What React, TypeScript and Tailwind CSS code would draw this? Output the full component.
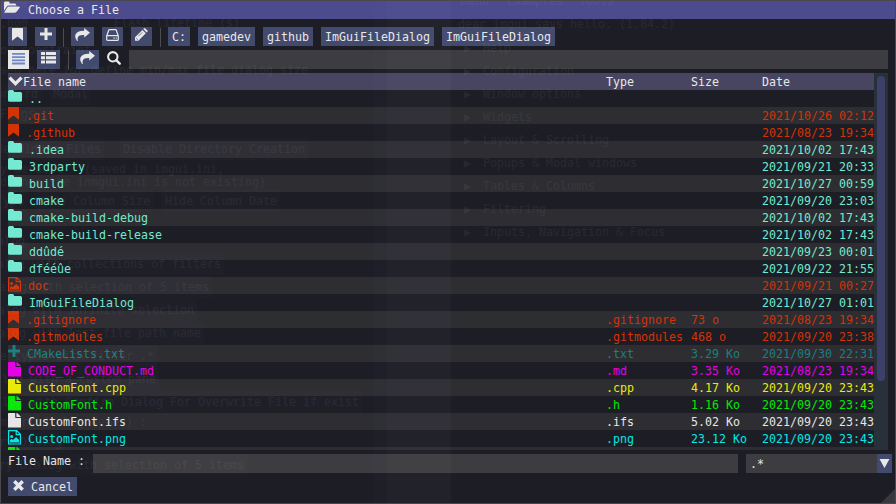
import type { ReactNode } from 'react';

type IconProps = { className?: string };

const FolderIcon = () => (
  <svg className="block h-3 w-3.5 shrink-0" viewBox="0 0 14 12" fill="currentColor">
    <path d="M0 1.6Q0 .1 1.5.1H4.6Q6 .1 6 1.6V2H12.4Q14 2 14 3.5V10.2Q14 11.8 12.4 11.8H1.6Q0 11.8 0 10.2Z" />
  </svg>
);
const BookmarkIcon = ({ className = '' }: IconProps) => (
  <svg className={`block h-[13px] w-[11px] shrink-0 ${className}`} viewBox="0 0 11 13" fill="currentColor">
    <path d="M.8 0H10.2Q11 0 11 .8V12.8L5.5 8.6 0 12.8V.8Q0 0 .8 0Z" />
  </svg>
);
const PlusIcon = ({ className = '' }: IconProps) => (
  <svg className={`block h-[13px] w-3 shrink-0 ${className}`} viewBox="0 0 12 13" fill="none" stroke="currentColor" strokeWidth="3">
    <path d="M0 6H12M6 0V12" />
  </svg>
);
const FileIcon = () => (
  <svg className="block h-[15px] w-[13px] shrink-0" viewBox="0 0 13 15" fill="currentColor">
    <path d="M0 .7Q0 0 .7 0H7.2V4.2Q7.2 5 8 5H13V14Q13 14.6 12.3 14.6H.7Q0 14.6 0 14Z" />
    <path d="M8.4 0Q9.4.1 10 .8L12.2 3Q12.8 3.6 12.8 4H8.4Z" />
  </svg>
);
const ImageFileIcon = () => (
  <svg className="block h-[15px] w-[13px] shrink-0" viewBox="0 0 13 15" fill="none" stroke="currentColor" strokeWidth="1.2">
    <path d="M.6.6H8.7L12.4 4.3V14H.6ZM8.2.6V4.7H12.4" />
    <path d="M2 12.4V10.3L3.6 8.8 4.9 10 8.1 6.9 11 9.8V12.4Z" fill="currentColor" stroke="none" />
    <circle cx="3.7" cy="6.6" r="1.5" fill="currentColor" stroke="none" />
  </svg>
);
const FolderOpenIcon = () => (
  <svg className="block h-[13px] w-4 shrink-0" viewBox="0 0 16 13" fill="currentColor">
    <path d="M0 9.8V2Q0 .6 1.4.6H4.2Q5.6.6 5.6 2V2.5H10.6Q12.3 2.5 12.3 4.5H5Q3.5 4.5 2.5 5.9Z" />
    <path d="M4.8 5.6H15.2Q16.4 5.6 15.6 6.8L12.8 10.4Q11.7 11.8 10.2 11.8H1Q0 11.8.6 10.8L3.2 6.6Q3.8 5.6 4.8 5.6Z" />
  </svg>
);
const ShareIcon = () => (
  <svg className="mt-px block h-3.5 w-[15px] shrink-0" viewBox="0 0 15 14" fill="currentColor">
    <path d="M9.2 0 15 4.8 9.2 9.6V7Q4.1 6.6 2.9 9.2 2.2 10.6 2.8 13H2Q0 10.4.1 7.8.8 2.8 9.2 2.7Z" />
  </svg>
);
const DriveIcon = () => (
  <svg className="block h-3 w-[13px] shrink-0" viewBox="0 0 13 12" fill="none" stroke="currentColor" strokeWidth="1.2" strokeLinejoin="round">
    <path d="M.7 7 2.7 1.2Q2.9.6 3.5.6H9.5Q10.1.6 10.3 1.2L12.3 7V10.4Q12.3 11.4 11.3 11.4H1.7Q.7 11.4.7 10.4ZM.7 6.7H12.3M7.4 9.1H8.6M9.7 9.1H10.8" />
  </svg>
);
const PencilIcon = () => (
  <svg className="block h-[13px] w-[13px] shrink-0" viewBox="0 0 13 13" fill="currentColor">
    <path d="M0 12.8V9.3L7.4 1.9 10.8 5.3 3.4 12.7ZM8.2 1.1 9.1.3Q9.7-.2 10.3.4L12.4 2.5Q13 3.1 12.4 3.7L11.6 4.5Z" />
    <path d="M1.2 10.1 2.8 11.7M3.4 8.2 7.2 4.4" stroke="#424a6d" strokeWidth=".7" />
  </svg>
);
const LinesIcon = () => (
  <svg className="block h-3 w-[13px] shrink-0" viewBox="0 0 13 12" fill="#6e86ce">
    <path d="M0 0H13V1.8H0ZM0 3.3H13V5H0ZM0 6.4H13V8.2H0ZM0 9.6H13V11.4H0Z" />
  </svg>
);
const ListIcon = () => (
  <svg className="block h-3 w-[15px] shrink-0" viewBox="0 0 15 12" fill="currentColor">
    <path d="M.5 0H4V3H.5Q0 3 0 2.5V.5Q0 0 .5 0ZM5 0H14.5Q15 0 15 .5V2.5Q15 3 14.5 3H5ZM0 4.3H4V7.3H0ZM5 4.3H15V7.3H5ZM0 8.6H4V11.6H.5Q0 11.6 0 11ZM5 8.6H15V11Q15 11.6 14.5 11.6H5Z" />
  </svg>
);
const SearchIcon = () => (
  <svg className="block h-3.5 w-3.5 shrink-0" viewBox="0 0 14 14" fill="none" stroke="currentColor">
    <circle cx="5.8" cy="5.8" r="4.7" strokeWidth="2.1" />
    <path d="M9.2 9.2 12.7 12.7" strokeWidth="2.4" strokeLinecap="round" />
  </svg>
);
const ChevronIcon = () => (
  <svg className="block h-3 w-[15px] shrink-0" viewBox="0 0 15 12" fill="none" stroke="currentColor" strokeWidth="3.3">
    <path d="M1.5 2.6 7.5 8.6 13.5 2.6" />
  </svg>
);
const CrossIcon = () => (
  <svg className="block h-3 w-[11px] shrink-0" viewBox="0 0 11 12" fill="none" stroke="currentColor" strokeWidth="3.5">
    <path d="M1.3 1.3 9.7 9.7M9.7 1.3 1.3 9.7" />
  </svg>
);

const RED = 'text-[#d43306]';
const MINT = 'text-[#73ead1]';
const icons = {
  folder: <FolderIcon />,
  mark: <BookmarkIcon />,
  image: <ImageFileIcon />,
  plus: <PlusIcon />,
  file: <FileIcon />,
};
type Row = [keyof typeof icons, string, string, string, string, string];
const rows: Row[] = [
  ['folder', '..', '', '', '', MINT],
  ['mark', '.git', '', '', '2021/10/26 02:12', RED],
  ['mark', '.github', '', '', '2021/08/23 19:34', RED],
  ['folder', '.idea', '', '', '2021/10/02 17:43', MINT],
  ['folder', '3rdparty', '', '', '2021/09/21 20:33', MINT],
  ['folder', 'build', '', '', '2021/10/27 00:59', MINT],
  ['folder', 'cmake', '', '', '2021/09/20 23:03', MINT],
  ['folder', 'cmake-build-debug', '', '', '2021/10/02 17:43', MINT],
  ['folder', 'cmake-build-release', '', '', '2021/10/02 17:43', MINT],
  ['folder', 'ddûdé', '', '', '2021/09/23 00:01', MINT],
  ['folder', 'dfééûe', '', '', '2021/09/22 21:55', MINT],
  ['image', 'doc', '', '', '2021/09/21 00:27', RED],
  ['folder', 'ImGuiFileDialog', '', '', '2021/10/27 01:01', MINT],
  ['mark', '.gitignore', '.gitignore', '73 o', '2021/08/23 19:34', RED],
  ['mark', '.gitmodules', '.gitmodules', '468 o', '2021/09/20 23:38', RED],
  ['plus', 'CMakeLists.txt', '.txt', '3.29 Ko', '2021/09/30 22:31', 'text-[#1f7f7c]'],
  ['file', 'CODE_OF_CONDUCT.md', '.md', '3.35 Ko', '2021/08/23 19:34', 'text-[#e600e6]'],
  ['file', 'CustomFont.cpp', '.cpp', '4.17 Ko', '2021/09/20 23:43', 'text-[#eaea08]'],
  ['file', 'CustomFont.h', '.h', '1.16 Ko', '2021/09/20 23:43', 'text-[#06e806]'],
  ['file', 'CustomFont.ifs', '.ifs', '5.02 Ko', '2021/09/20 23:43', 'text-[#e6e6e6]'],
  ['image', 'CustomFont.png', '.png', '23.12 Ko', '2021/09/20 23:43', 'text-[#06e6e6]'],
  ['file', '', '', '', '', 'text-[#06e806]'],
];

// Text of the windows behind the dialog: x, y, text, whether it sits on a button.
const behind: [number, number, string, boolean?][] = [
  [13, -4, '20 6.3 :'], [0, 15, ',000'], [114, 15, 'Flash lifetime (s)'],
  [0, 42, 'og constraint'], [0, 62, 'sen here for define min/max file dialog size'],
  [-4, 86, 'andard', true], [53, 86, 'Modal', true], [0, 106, 'F  gs :'],
  [-4, 141, 'de Hidden Files', true], [123, 141, 'Disable Directory Creation', true],
  [0, 161, 'y default   (saved in imgui.ini,'], [0, 174, 'd when the inmgui.ini is not existing)'],
  [-4, 193, 'Type', true], [38, 193, 'Hide Column Size', true], [165, 193, 'Hide Column Date', true],
  [-3, 233, 'alog', true], [-3, 256, 'alog with collections of filters', true],
  [-1, 279, 'alog with selection of 5 items', true], [-2, 302, 'alog with infinite selection', true],
  [-2, 325, 'alog with last file path name', true], [0, 348, 'e types with filter .*', true],
  [2, 371, 'log with a custom pane', true],
  [2, 394, 'log with Confirm Dialog For Overwrite File if exist', true],
  [0, 414, 'mport dialog demo() :'], [-1, 434, 'ry Dialog', true],
  [-1, 457, 'ry Dialog with selection of 5 items', true], [-4, 480, 't :'],
  [461, -7, 'Menu'], [507, -7, 'Examples'], [579, -7, 'Tools'],
  [458, 16, 'dear imgui says hello. (1.84.2)'],
  [464, 40, '▶'], [483, 40, 'Help'], [464, 63, '▶'], [483, 63, 'Configuration'],
  [464, 86, '▶'], [483, 86, 'Window options'], [464, 109, '▶'], [483, 109, 'Widgets'],
  [464, 132, '▶'], [483, 132, 'Layout & Scrolling'], [464, 155, '▶'], [483, 155, 'Popups & Modal windows'],
  [464, 178, '▶'], [483, 178, 'Tables & Columns'], [464, 201, '▶'], [483, 201, 'Filtering'],
  [464, 224, '▶'], [483, 224, 'Inputs, Navigation & Focus'],
];

const Behind = () => (
  <div className="pointer-events-none absolute -inset-px overflow-hidden">
    <div className="absolute inset-y-0 left-[374px] w-[13px] bg-[#8080ff]/[0.02]" />
    <div className="absolute inset-y-0 left-[387px] w-16 bg-[#d8d8ff]/[0.027]" />
    {behind.map(([x, y, text, button]) => (
      <span
        key={`${x}-${y}`}
        className={`absolute whitespace-pre leading-4 text-white/[0.05] ${button ? 'bg-[#a0a0ff]/[0.015] shadow-[0_0_0_3px_rgba(160,160,255,0.015)]' : ''}`}
        style={{ left: x, top: y }}
      >
        {text}
      </span>
    ))}
  </div>
);

const Tool = ({ w, children }: { w: string; children: ReactNode }) => (
  <div className={`flex h-[19px] shrink-0 justify-center bg-[#424a6d] ${w}`}>{children}</div>
);
const Rule = () => <div className="mt-px h-[19px] w-px shrink-0 bg-[#4b4b50]" />;

export default function App() {
  return (
    <div className="relative flex h-[504px] w-[896px] flex-col overflow-hidden border border-[#48484e] bg-[#1d1d25] font-['DejaVu_Sans_Mono','Liberation_Mono',monospace] text-[11.63px] leading-[19px] text-[#e8e8e8]">
      <header className="flex h-[18px] shrink-0 bg-[#4b4b8d] pl-[3px]">
        <FolderOpenIcon />
        <span className="pl-2">Choose a File</span>
      </header>

      <div className="mt-2 flex h-[19px] shrink-0 gap-[7px] pl-[7px] leading-[21px]">
        <div className="flex gap-2">
          <Tool w="w-[19px]"><BookmarkIcon className="mt-px" /></Tool>
          <Tool w="w-[21px]"><PlusIcon className="mt-px" /></Tool>
        </div>
        <Rule />
        <div className="mr-px flex gap-2">
          <Tool w="w-[23px]"><ShareIcon /></Tool>
          <Tool w="w-[21px]"><div className="mt-0.5"><DriveIcon /></div></Tool>
          <Tool w="w-[21px]"><div className="mt-px"><PencilIcon /></div></Tool>
        </div>
        <Rule />
        <div className="flex gap-2">
          <Tool w="w-[22px]">C:</Tool>
          <Tool w="w-[57px]">gamedev</Tool>
          <Tool w="w-[50px]">github</Tool>
          <Tool w="w-[113px]">ImGuiFileDialog</Tool>
          <Tool w="w-[113px]">ImGuiFileDialog</Tool>
        </div>
      </div>

      <div className="mt-1 flex h-[19px] shrink-0 px-[7px]">
        <div className="mr-2 flex w-[21px] justify-center bg-[#e8e8e4] pt-[3px]"><LinesIcon /></div>
        <Tool w="w-[23px]"><div className="mt-0.5"><ListIcon /></div></Tool>
        <div className="ml-2 mr-[7px]"><Rule /></div>
        <Tool w="w-[23px]"><ShareIcon /></Tool>
        <div className="mx-2 mt-px"><SearchIcon /></div>
        <div className="flex-1 bg-[#3d3c40]" />
      </div>

      <div className="ml-[7px] mt-1 flex h-[377px] w-[880px] shrink-0 overflow-hidden">
        <div className="w-[866px]">
          <div className="grid h-[17px] grid-cols-[598px_85px_71px_112px] bg-[#474560]">
            <div className="flex"><div className="mt-0.5"><ChevronIcon /></div>File name</div>
            <span>Type</span>
            <span>Size</span>
            <span>Date</span>
          </div>
          {rows.map(([kind, name, type, size, date, color], i) => (
            <div
              key={i}
              className={`grid h-[17px] grid-cols-[598px_85px_71px_112px] whitespace-pre ${color} ${i % 2 ? 'bg-[#2d2d32]' : ''}`}
            >
              <div className="flex gap-[7px]">{icons[kind]}<span>{name}</span></div>
              <span>{type}</span>
              <span>{size}</span>
              <span>{date}</span>
            </div>
          ))}
        </div>
        <div className="flex w-3.5 justify-center bg-[#28303a] pt-[3px]">
          <div className="h-[305px] w-2 rounded-full bg-[#3d4069]" />
        </div>
      </div>

      <div className="mt-1 flex h-[19px] shrink-0 pl-[7px]">
        <span className="w-[85px] leading-[15px]">File Name :</span>
        <div className="mr-2 w-[645px] bg-[#3d3c40]" />
        <div className="w-[131px] bg-[#3d3c40] pl-1 leading-[21px]">.*</div>
        <div className="flex w-[15px] justify-center bg-[#424a6d] pt-[5px]">
          <svg className="h-[9px] w-[11px]" viewBox="0 0 11 9" fill="currentColor"><path d="M.5 0H10.5L5.5 9Z" /></svg>
        </div>
      </div>

      <div className="ml-[7px] mt-1 flex h-[19px] w-[69px] shrink-0 bg-[#424a6d] pl-[5px] leading-[21px]">
        <div className="mt-[3px]"><CrossIcon /></div>
        <span className="pl-[7px]">Cancel</span>
      </div>
      <svg className="absolute bottom-0 right-0 h-3.5 w-3.5" viewBox="0 0 14 14"><path d="M14 0V14H0Z" fill="#38383d" /></svg>
      <Behind />
    </div>
  );
}
